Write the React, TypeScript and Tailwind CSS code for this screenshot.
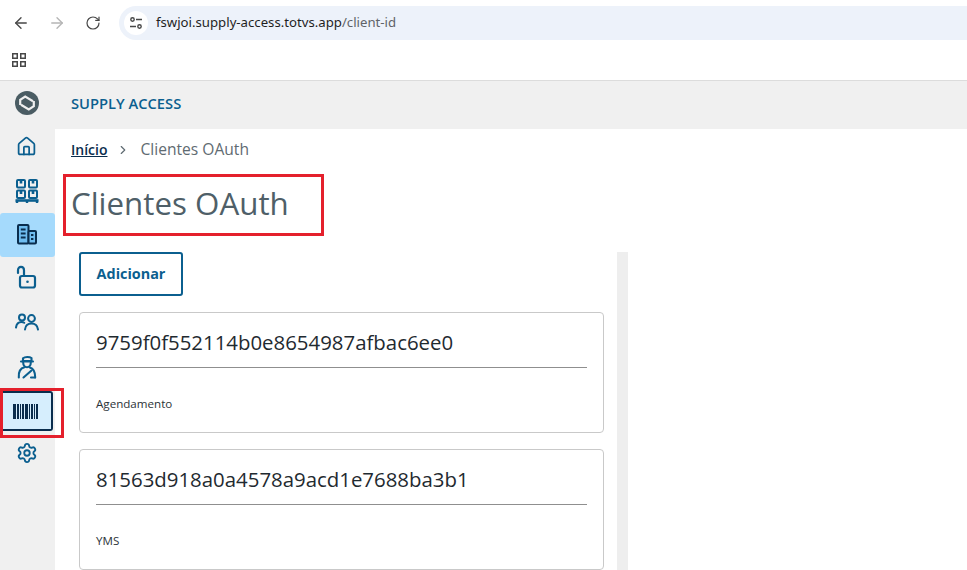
import { ArrowLeft, ArrowRight, RotateCw, ChevronRight, House, Settings } from 'lucide-react'

const navColor = '#0b5f8f'

function Logo() {
  return (
    <svg width="24" height="24" viewBox="0 0 24 24" fill="none">
      <circle cx="12" cy="12" r="12" fill="#4a5c63" />
      <path d="M5.2 14V8.8L10.2 5.6L18 10.2" stroke="#f0f0f0" strokeWidth="2.2" />
      <path d="M18.8 10V15.2L13.8 18.4L6 13.8" stroke="#f0f0f0" strokeWidth="2.2" />
    </svg>
  )
}

function PalletIcon() {
  return (
    <svg width="24" height="24" viewBox="0 0 24 24" fill="none" stroke={navColor} strokeWidth="2">
      <rect x="2" y="1" width="8" height="7.5" rx="1" />
      <rect x="14" y="1" width="8" height="7.5" rx="1" />
      <rect x="2" y="11.5" width="8" height="7.5" rx="1" />
      <rect x="14" y="11.5" width="8" height="7.5" rx="1" />
      <path d="M6 1v3.5M18 1v3.5M6 11.5V15M18 11.5V15" strokeWidth="2.6" />
      <path d="M0.5 21.5h23" strokeWidth="2.6" />
      <path d="M2 21.5v2.5M12 21.5v2.5M22 21.5v2.5" strokeWidth="2.4" />
    </svg>
  )
}

function BuildingIcon() {
  return (
    <svg width="22" height="22" viewBox="0 0 22 22" fill="none" stroke="#0a2d4d" strokeWidth="2">
      <rect x="2" y="2" width="10.5" height="18.5" rx="1" fill="#6fbdf0" />
      <rect x="12.5" y="8" width="7.5" height="12.5" rx="1" fill="#6fbdf0" />
      <path d="M4.8 6.5h4.8M4.8 10.5h4.8M4.8 14.5h4.8M15 12h2.4M15 16h2.4" strokeWidth="1.8" />
    </svg>
  )
}

function LockIcon() {
  return (
    <svg width="24" height="24" viewBox="0 0 24 24" fill="none" stroke={navColor} strokeWidth="2.2" strokeLinecap="round">
      <path d="M3 8V5.2C3 3 4.3 1.8 6 1.8S9 3 9 5.2V11" />
      <rect x="5" y="11" width="15" height="11.5" rx="2" />
      <circle cx="12.5" cy="16.8" r="1.3" fill={navColor} stroke="none" />
    </svg>
  )
}

function UsersIcon() {
  return (
    <svg width="24" height="24" viewBox="0 0 24 24" fill="none" stroke={navColor} strokeWidth="2" strokeLinecap="round">
      <circle cx="7" cy="7.5" r="3" />
      <circle cx="16.5" cy="8.5" r="3.4" />
      <path d="M1 17.5c.5-3.5 2.5-5.5 5.5-5.5 1 0 2 .3 2.7.8" />
      <path d="M10 19.5c.4-3.7 3-6 6.5-6s6 2.3 6.5 6" />
    </svg>
  )
}

function DriverIcon() {
  return (
    <svg width="24" height="24" viewBox="0 0 24 24" fill="none" stroke={navColor} strokeWidth="2.1" strokeLinecap="round" strokeLinejoin="round">
      <path d="M8 6V3.2C10 1.6 14.5 1.6 16.5 3V6z" />
      <path d="M6 6.5h12" />
      <path d="M8.2 7.5c0 2.8 1.6 4.8 3.8 4.8s3.8-2 3.8-4.8" />
      <path d="M3.8 22.5c-.4-5.5 2-9.3 5.7-10.2" />
      <path d="M14.8 12.5c3 .8 5.4 3.5 5.4 10" />
      <path d="M8.5 22.5L16.5 15.5M16 22.5h4" />
    </svg>
  )
}

function Barcode() {
  const bars = [3, 2, 1, 2, 3, 1, 2, 1, 2]
  return (
    <div className="flex h-[15px] items-stretch gap-px">
      {bars.map((w, i) => (
        <span key={i} className={w === 3 ? 'w-[3px] bg-[#0a2d4d]' : w === 2 ? 'w-[2px] bg-[#0a2d4d]' : 'w-px bg-[#0a2d4d]'} />
      ))}
    </div>
  )
}

function Card({ id, name }: { id: string; name: string }) {
  return (
    <div className="h-[121px] rounded border border-[#c9c9c9] bg-white px-4 pt-[14px]">
      <div className="h-[41px] border-b border-[#8f8f8f] text-[20.4px] leading-[30px] text-[#1f2a30]">{id}</div>
      <div className="mt-[28px] text-[11.6px] leading-4 text-[#2b3338]">{name}</div>
    </div>
  )
}

export default function App() {
  return (
    <div className="relative h-[570px] w-[967px] overflow-hidden bg-white font-['Open_Sans',sans-serif]">
      {/* Browser chrome */}
      <div className="flex h-10 items-center bg-white pl-[3px] pt-[6px]">
        <div className="flex items-center text-[#474747]">
          <span className="flex w-9 justify-center"><ArrowLeft size={18} strokeWidth={1.8} /></span>
          <span className="flex w-9 justify-center"><ArrowRight size={18} strokeWidth={1.8} className="text-[#b5b5b5]" /></span>
          <span className="flex w-9 justify-center"><RotateCw size={16} strokeWidth={1.8} /></span>
        </div>
        <div className="ml-2 flex h-[34px] flex-1 items-center rounded-l-full bg-[#edf2fa] pl-[5px] font-['Noto_Sans',sans-serif] text-[13.2px] text-[#1f1f1f]">
          <div className="flex h-6 w-6 items-center justify-center rounded-full bg-white">
            <svg width="14" height="14" viewBox="0 0 14 14" fill="none" stroke="#474747" strokeWidth="1.4">
              <circle cx="3.5" cy="3.5" r="1.7" />
              <path d="M7 3.5h6M1 10.5h6" />
              <circle cx="10.5" cy="10.5" r="1.7" />
            </svg>
          </div>
          <span className="ml-2">
            fswjoi.supply-access.totvs.app<span className="text-[#5f6368]">/client-id</span>
          </span>
        </div>
      </div>
      <div className="flex h-[41px] items-center border-b border-[#dcdcdc] bg-white pb-px pl-3">
        <svg width="14" height="14" viewBox="0 0 14 14" fill="none" stroke="#474747" strokeWidth="1.5">
          <rect x="0.75" y="0.75" width="4.5" height="4.5" />
          <rect x="8.75" y="0.75" width="4.5" height="4.5" />
          <rect x="0.75" y="8.75" width="4.5" height="4.5" />
          <rect x="8.75" y="8.75" width="4.5" height="4.5" />
        </svg>
      </div>

      {/* App */}
      <div className="flex h-[489px]">
        <aside className="flex w-[55px] shrink-0 flex-col items-center bg-[#f0f0f0]">
          <div className="flex h-[44px] w-full shrink-0 items-center justify-center pr-[2px]"><Logo /></div>
          <div className="flex h-[44px] w-full items-center justify-center pb-[2px] pr-[2px]"><House size={21} color={navColor} strokeWidth={2} /></div>
          <div className="flex h-[44px] w-full items-center justify-center pr-[2px]"><PalletIcon /></div>
          <div className="flex h-[44px] w-full items-center justify-center rounded-[3px] bg-[#a5dafc] pb-[2px] pr-[2px]"><BuildingIcon /></div>
          <div className="flex h-[44px] w-full items-center justify-center pb-[4px] pr-[2px]"><LockIcon /></div>
          <div className="flex h-[44px] w-full items-center justify-center pb-[2px] pr-[2px]"><UsersIcon /></div>
          <div className="flex h-[44px] w-full items-center justify-center pr-[2px]"><DriverIcon /></div>
          <div className="mt-[2px] flex h-[40px] w-[53px] items-center justify-center self-start rounded-r-[3px] border-2 border-l-0 border-[#0a2d4d] bg-[#d6eefd]"><Barcode /></div>
          <div className="flex h-[44px] w-full items-center justify-center pr-[2px]"><Settings size={22} color={navColor} strokeWidth={2} /></div>
        </aside>

        <main className="min-w-0 flex-1">
          <div className="flex h-[48px] items-center bg-[#f0f0f0] pb-[3px] pl-4 text-[14.7px] font-semibold text-[#0b5f8f]">SUPPLY ACCESS</div>
          <div className="flex h-[41px] items-center pl-4 text-[15.6px]">
            <span className="text-[14px] font-semibold text-[#0a2d4d] underline">Início</span>
            <ChevronRight size={14} className="ml-[9px] text-[#5f6b72]" />
            <span className="ml-[10px] text-[#5f6b72]">Clientes OAuth</span>
          </div>
          <h1 className="flex h-[68px] items-center pb-[2px] pl-4 text-[31.3px] text-[#4f5f68]">Clientes OAuth</h1>
          <div className="mt-[14px] flex pl-6">
            <div className="w-[538px] space-y-4 pr-[13px]">
              <button className="h-[44px] w-[104px] rounded-[3px] border-2 border-[#0b5f8f] text-[14.4px] font-bold text-[#0b5f8f]">Adicionar</button>
              <Card id="9759f0f552114b0e8654987afbac6ee0" name="Agendamento" />
              <Card id="81563d918a0a4578a9acd1e7688ba3b1" name="YMS" />
            </div>
            <div className="h-[318px] w-[11px] bg-[#eeeeee]" />
          </div>
        </main>
      </div>

      {/* Red annotations */}
      <div className="absolute left-[63px] top-[174px] h-[62px] w-[261px] border-[3px] border-[#e4202c]" />
      <div className="absolute left-0 top-[388px] h-[50px] w-[64px] border-[3px] border-[#e4202c]" />
    </div>
  )
}
